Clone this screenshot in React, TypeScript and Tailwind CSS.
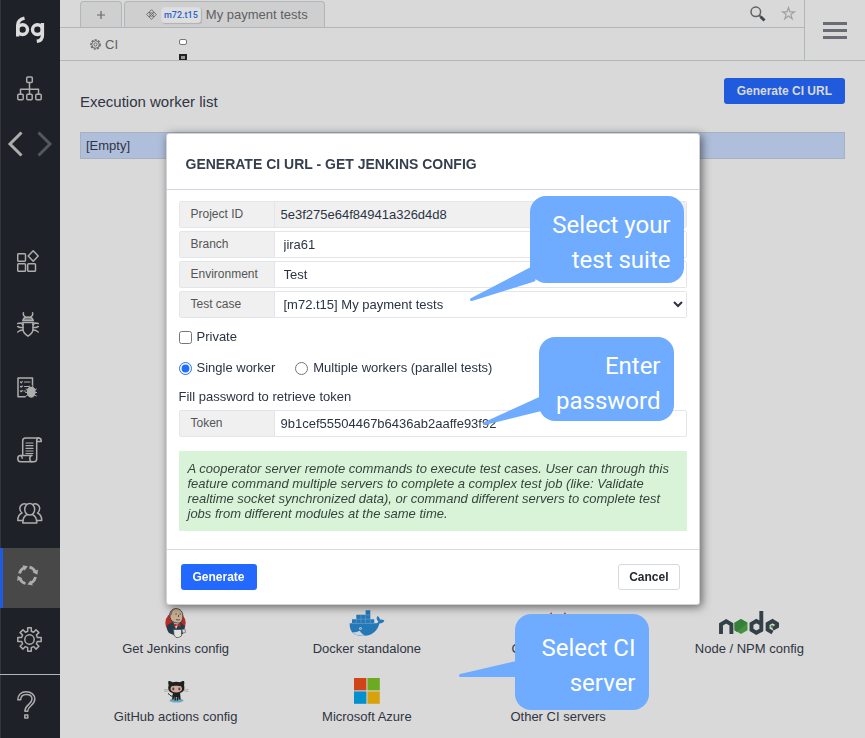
import type { ReactNode } from "react";
import { SiGitlab } from "react-icons/si";

const stroke = {
  fill: "none",
  stroke: "currentColor",
  strokeWidth: 1.5,
  strokeLinejoin: "round" as const,
  strokeLinecap: "round" as const,
};

function Logo() {
  return (
    <svg width="30" height="28" viewBox="0 0 30 28" fill="none" stroke="#dcdcdc" strokeWidth="3.4" aria-label="bg">
      <path d="M2.700 20.500V9.500C2.700 6 5 3.200 9.500 2.200" />
      <circle cx="7.600" cy="13.600" r="4.900" />
      <circle cx="22.400" cy="13.600" r="4.900" />
      <path d="M27.400 7v12.500c0 3.300-2 5.300-5.600 5.800" />
    </svg>
  );
}

function SitemapIcon() {
  return (
    <svg width="25" height="25" viewBox="0 0 25 25" {...stroke}>
      <rect x="9.700" y="1" width="5.600" height="5.600" rx="1" />
      <rect x="0.800" y="18.200" width="5.400" height="5.600" rx="1" />
      <rect x="9.800" y="18.200" width="5.400" height="5.600" rx="1" />
      <rect x="18.800" y="18.200" width="5.400" height="5.600" rx="1" />
      <path d="M12.500 6.600v11.600M3.500 18.200v-5h18v5" />
    </svg>
  );
}

function BlocksIcon() {
  return (
    <svg width="22" height="22" viewBox="0 0 22 22" {...stroke}>
      <rect x="0.700" y="3.700" width="7.800" height="7.600" rx="1" />
      <rect x="0.700" y="13.700" width="7.800" height="7.600" rx="1" />
      <rect x="10.700" y="13.700" width="7.800" height="7.600" rx="1" />
      <path d="M16.200 0.800l5 5.200-5 5.200-5-5.200z" />
    </svg>
  );
}

function BugIcon() {
  return (
    <svg width="22" height="25" viewBox="0 0 22 25" {...stroke}>
      <path d="M6.400 0.800v2.400l2 1.800M15.600 0.800v2.400l-2 1.800" />
      <path d="M5.800 8.600C6.200 6 8 4.900 11 4.900s4.800 1.100 5.200 3.700z" fill="#77787a" />
      <path d="M5.200 10.500h11.600M6 10.500v7c0 3 2.500 5 5 6.700 2.500-1.700 5-3.700 5-6.700v-7" />
      <path d="M6 12.700L3.500 11 .800 11.500M6 15.500H3L.700 14.500M6 18l-3 .500L.800 20M16 12.700l2.500-1.700 2.700.500M16 15.500h3l2.300-1M16 18l3 .500 2.200 1.500" />
    </svg>
  );
}

function ReportIcon() {
  return (
    <svg width="20" height="21" viewBox="0 0 20 21" {...stroke}>
      <path d="M8.200 19.700H1V1h14.500v7" />
      <path d="M3.500 5l.800.800 1-1.300M7.500 5h5.500M3.500 9.500l.800.700 1-1.200M7.500 9.500h4M3.500 14l.800.700 1-1.200M7 14h1.500" strokeWidth="1.200" />
      <path d="M10.500 14.500c0-2.700 1.400-4 3.700-4s3.700 1.300 3.700 4c0 3-1.500 5.500-3.700 5.500s-3.700-2.500-3.700-5.500z" fill="currentColor" />
      <path d="M12.500 9l.7 1.500M16 9l-.7 1.500M9 12l1.500.8M8.600 15.500h2M9 19l1.800-1M19.400 12l-1.500.8M19.700 15.500h-2M19.400 19l-1.800-1" strokeWidth="1" />
    </svg>
  );
}

function ScrollIcon() {
  return (
    <svg width="25" height="26" viewBox="0 0 25 26" {...stroke}>
      <path d="M5.700 18V4c0-2 1-3 2.800-3h13.200c1.500 0 2.600 1.300 2.600 3.500h-4.500" />
      <path d="M21.700 1c-1.300 0-2 1-2 2.500v18c0 2-1 3.300-2.700 3.300H3.500C1.800 24.800.800 23.500.800 21.500S1.800 18.600 3.500 18.600h11.300" />
      <path d="M14.800 18.600c-1.300 0-2 1.200-2 2.900 0 2 .700 3.300 2.200 3.300M3.800 18.600c1 .5 1.400 1.500 1.400 2.700" />
      <path d="M9 6h7M9 8.700h7M9 11.400h7M9 14h7M9 16.500h7" strokeWidth="1.200" />
    </svg>
  );
}

function UsersIcon() {
  return (
    <svg width="26" height="22" viewBox="0 0 26 22" {...stroke}>
      <ellipse cx="12.700" cy="7.300" rx="5" ry="5.800" />
      <path d="M10 12.500c-2.800 1.300-4.200 3-4.200 8.500h14c0-5.500-1.500-7.200-4.300-8.500" />
      <path d="M9.300 2.300A4.600 4.600 0 0 0 2.800 6c0 2.500 1 4 2.200 5-2.700 1-4.200 3-4.200 7.500h5" />
      <path d="M16.200 2.300A4.600 4.600 0 0 1 22.700 6c0 2.500-1 4-2.200 5 2.700 1 4.200 3 4.200 7.500h-5" />
    </svg>
  );
}

function CycleIcon() {
  return (
    <svg width="21" height="21" viewBox="0 0 21 21" fill="none" stroke="currentColor" strokeWidth="2.800">
      <path d="M2.500 8.500C3.200 5.700 4.800 3.800 7 2.700M12.500 2.200c2.800.700 4.600 2.300 5.600 4.600M18.500 12c-.7 2.900-2.300 4.900-4.500 5.900M8.500 18.500c-2.900-.7-4.600-2.300-5.600-4.700" />
      <path d="M5.500.3l5.300 1-3.200 4.400zM21 4.500l-.6 5.300-4.800-2.600zM15.800 20.500l-5.400-.9 3.300-4.400zM.2 16l.5-5.200 4.700 2.400z" fill="currentColor" stroke="none" />
    </svg>
  );
}

function GearIcon() {
  return (
    <svg width="25" height="25" viewBox="0 0 25 25" {...stroke}>
      <circle cx="12.500" cy="12.500" r="4.700" />
      <path d="M10.700.8h3.600v3.400l2.300 1 2.400-2.500 2.900 2.900-2.500 2.400 1 2.400h3.800v4h-3.800l-1 2.300 2.500 2.500-2.900 2.900-2.400-2.500-2.300 1v3.600h-3.600v-3.600l-2.300-1L6 22.100l-2.900-2.900 2.500-2.500-1-2.300H.8v-4h3.800l1-2.400-2.500-2.400L6 2.700l2.400 2.500 2.300-1z" />
    </svg>
  );
}

function HelpIcon() {
  return (
    <svg width="19" height="28" viewBox="0 0 19 28" {...stroke}>
      <path d="M.8 8.800C.8 4 4 .8 9.200.8S17.800 3.900 17.800 8c0 6.800-7.100 6.600-7.100 12.200H7.900c0-6.800 7.100-6.800 7.100-12.200 0-2.600-2.200-4.500-5.700-4.500S3.700 5.400 3.700 8.800z" />
      <rect x="7.800" y="23.900" width="3" height="3" />
    </svg>
  );
}

function Magnifier() {
  return (
    <svg width="16" height="16" viewBox="0 0 16 16" fill="none" stroke="#5f6266">
      <circle cx="5.800" cy="5.800" r="4.800" strokeWidth="1.500" />
      <path d="M9 9l2.500 2.500" strokeWidth="2" />
      <path d="M10.700 10.700l3.800 3.800" strokeWidth="3" stroke="#43474c" />
    </svg>
  );
}

function Jenkins() {
  return (
    <svg width="22" height="30" viewBox="0 0 22 30">
      <ellipse cx="10.500" cy="15" rx="10.200" ry="11" fill="#b52b27" />
      <path d="M4 25c-2-3-3-6-1-8.500L8 14l8 .5 4 4-2 7.500-7 2z" fill="#253a4b" />
      <path d="M8 13l7 1-4 7z" fill="#d8d8d6" />
      <path d="M9 15.500l3 1 3.500-1.500v4L12 17.500 9 19z" fill="#b52b27" />
      <path d="M5 9.500C4 3.500 7 .6 11 .6s7.300 3 6.800 8.500c-.3 4-2 6.200-5.300 6C9 15 5.800 13 5 9.500z" fill="#c7ae92" stroke="#33302e" strokeWidth=".8" />
      <path d="M5 9.500C3.500 4 6.500.8 10.500.7 8 1.700 7 4 7 6.500L6 7z" fill="#77706a" />
      <path d="M10.300 6h1.500M14.500 6H16M11 11.500c1.500.7 3 .5 4 0M13.500 7v2" stroke="#45362e" strokeWidth=".8" fill="none" />
      <path d="M8.500 21.500h8v6.500l-3 1.500h-2.500L9 27z" fill="#e0e0e0" stroke="#454545" strokeWidth=".7" />
      <path d="M17 21.500l3-.5.5 3.500-3 .5z" fill="#d8d8d6" stroke="#555" strokeWidth=".6" />
    </svg>
  );
}

function Docker() {
  return (
    <svg width="36" height="27" viewBox="0 0 36 27">
      <path d="M.7 13.300h26.500c1.600-.3 2.200-1 2-2C27.300 9.600 27.300 7.600 28.500 6c1.400.8 2.300 2 2.500 3.700 1.500-.3 3-.1 4.300.8-.8 2.200-2.500 3-4.900 3C28.200 21.800 22.500 26 13.500 26 5.500 26 .2 22.500.7 13.300z" fill="#2478b8" />
      <path d="M3 9.200h22.200v4.300H3zM7.300 4.700h14v5h-14zM16.600.3h4.700v5h-4.700z" fill="#2478b8" />
      <path d="M7.300 9.200v4M11.900 4.700v8.500M16.500 4.700v8.500M21.200 9.200v4M7.300 9.200h14M16.600 4.900h4.700M3 13.400h22.200" stroke="#6a9fc6" strokeWidth=".6" />
      <path d="M3.500 22.300c3 .3 5.500-.5 7.300-1.500 1.500 2.500 3.200 4.100 5.700 4.900C10.500 26.300 6 25.300 3.500 22.300z" fill="#c9d5dc" />
      <circle cx="11.500" cy="18.600" r="1.300" fill="#d9d9d9" />
      <circle cx="11.600" cy="18.700" r=".5" fill="#24394c" />
    </svg>
  );
}

function NodeLogo() {
  return (
    <svg width="60" height="26" viewBox="0 0 60 26" fill="none" stroke="#344047" strokeWidth="3.900" aria-label="Node">
      <path d="M2 24v-9.700l5.200-3 5.200 3V24" />
      <path d="M22 9l6.500 3.700v7.600L22 24l-6.500-3.700v-7.600z" fill="#43923f" stroke="none" />
      <path d="M22 9l6.500 3.700L18 22l-2.500-1.700v-7.600z" fill="#37803a" stroke="none" />
      <path d="M42.300 1v19l-5 2.700-4.800-2.900v-6l4.800-2.800 5 2.700" />
      <path d="M53.500 22.500l-4.900-2.800v-5.800l4.900-2.900 4.700 2.900v2.300l-4.500 2.500" />
      <circle cx="53" cy="16.500" r="1.400" fill="#43923f" stroke="none" />
    </svg>
  );
}

function Octocat() {
  return (
    <svg width="26" height="23" viewBox="0 0 26 23">
      <ellipse cx="13.500" cy="20.500" rx="7" ry="2" fill="#68a9c4" />
      <path d="M10 12h7l.7 7.500h-2l-.4-3-.2 4h-1.400v-3.500h-.8V20.500h-1.400l-.3-4-.6 3H9z" fill="#20201f" />
      <path d="M10 16c-3 1-3-2-5-2.500" stroke="#20201f" fill="none" />
      <path d="M5.500 1c2 0 3 .6 4 1.300a16 16 0 0 1 7.500 0c1-.7 2-1.300 4-1.300.5 1.800.4 3 0 4 1.300 4.500-.3 8.500-7.700 8.500S4.200 9.500 5.700 5c-.5-1-.6-2.200-.2-4z" fill="#20201f" />
      <path d="M8.700 6.300c1.500-.8 7.600-.8 9.200 0 2.300 2.300 1.300 6.200-4.600 6.200s-6.900-3.900-4.600-6.200z" fill="#cfa99a" />
      <ellipse cx="10.300" cy="9" rx="1" ry="1.400" fill="#5f3a35" />
      <ellipse cx="16.300" cy="9" rx="1" ry="1.400" fill="#5f3a35" />
      <path d="M1 9.500l4.500.3M1 11.500l4.500-.6M25.500 9.500l-4.500.3M25.500 11.500l-4.500-.6" stroke="#99908c" strokeWidth=".6" />
    </svg>
  );
}

function Microsoft() {
  return (
    <svg width="26" height="26" viewBox="0 0 26 26">
      <path fill="#cf4519" d="M0 0h12.400v12.400H0z" />
      <path fill="#6caa22" d="M13.400 0h12.400v12.400H13.400z" />
      <path fill="#0490cc" d="M0 13.400h12.400v12.400H0z" />
      <path fill="#d7a20e" d="M13.400 13.400h12.400v12.400H13.400z" />
    </svg>
  );
}

function SideItem({ label, active = false, children }: { label: string; active?: boolean; children: ReactNode }) {
  return (
    <button
      aria-label={label}
      className={
        active
          ? "flex h-[60px] w-full items-center border-l-3 border-[#205bde] bg-[#484848] pb-1.5 pl-[14px]"
          : "flex h-[60px] w-full items-center pb-1 pl-[17px]"
      }
    >
      {children}
    </button>
  );
}

function Sidebar() {
  return (
    <nav className="flex w-[60px] shrink-0 flex-col bg-[#1e2128] text-[#adadad] shadow-[inset_1px_0_0_#34363b]">
      <div className="flex h-[60px] items-center justify-center">
        <Logo />
      </div>
      <div className="flex h-[60px] items-center pb-1 pl-[17px]">
        <button aria-label="Structure">
          <SitemapIcon />
        </button>
      </div>
      <div className="flex h-12 items-center justify-between px-[7px]">
        <button aria-label="Back">
          <svg width="16" height="26" viewBox="0 0 16 26" fill="none" stroke="#adadad" strokeWidth="3">
            <path d="M14.500 1.500L3 13l11.500 11.500" />
          </svg>
        </button>
        <button aria-label="Forward">
          <svg width="16" height="26" viewBox="0 0 16 26" fill="none" stroke="#55575b" strokeWidth="3">
            <path d="M1.500 1.500L13 13 1.500 24.500" />
          </svg>
        </button>
      </div>
      <div className="mt-auto flex flex-col gap-[3px] pb-[3px]">
        <SideItem label="Modules"><BlocksIcon /></SideItem>
        <SideItem label="Bugs"><BugIcon /></SideItem>
        <SideItem label="Reports"><ReportIcon /></SideItem>
        <SideItem label="Scripts"><ScrollIcon /></SideItem>
        <SideItem label="Team"><UsersIcon /></SideItem>
        <SideItem label="CI" active><CycleIcon /></SideItem>
        <SideItem label="Settings"><GearIcon /></SideItem>
      </div>
      <div className="flex h-16 items-center border-t border-[#b4b4b4] pb-1 pl-[17px]">
        <button aria-label="Help">
          <HelpIcon />
        </button>
      </div>
    </nav>
  );
}

function TopBar() {
  return (
    <header className="flex h-[61px] border-b border-[#b1b6ba] text-[#5e6064]">
      <div className="flex flex-1 flex-col">
        <div className="flex h-7 items-end justify-between border-b border-[#b1b6ba] pr-2 pl-5">
          <div className="flex gap-0.5 self-stretch pt-px">
            <button aria-label="New tab" className="flex w-[42px] items-center justify-center rounded-t border border-b-0 border-[#b1b6ba] bg-[#cfcfcf]">
              <svg width="8" height="8" viewBox="0 0 8 8" stroke="#66686a" strokeWidth="1.200">
                <path d="M4 0v8M0 4h8" />
              </svg>
            </button>
            <button className="flex items-center rounded-t border border-b-0 border-[#b1b6ba] bg-[#cfcfcf] pr-4 pl-[21px] text-[13px]">
              <svg width="11" height="11" viewBox="0 0 11 11" fill="none" stroke="#6d6f71" strokeWidth="1">
                <path d="M5.500.7l4.800 4.800-4.800 4.800L.7 5.500zM3 3l5 5M8 3L3 8" />
                <circle cx="5.500" cy="5.500" r="1.800" />
              </svg>
              <span className="mr-[5px] ml-1 rounded-[3px] border border-[#d8dadd] bg-[#dedede] px-0.5 font-[Roboto,sans-serif] text-[9px] leading-[14px] font-medium text-[#2563cf] shadow-[1px_1px_1px_#b0b0b0]">
                m72.t15
              </span>
              My payment tests
            </button>
          </div>
          <div className="flex items-center gap-[15px] self-stretch">
            <button aria-label="Search"><Magnifier /></button>
            <button aria-label="Favorite">
              <svg width="15" height="15" viewBox="0 0 15 15" fill="none" stroke="#a2a2a2" strokeWidth="1.200">
                <path d="M7.500 1.500l1.400 4.300h4.600L9.800 8.500l1.400 4.300-3.700-2.700-3.700 2.700 1.400-4.300-3.700-2.700h4.600z" />
              </svg>
            </button>
          </div>
        </div>
        <div className="flex h-8 pl-[30px]">
          <div className="flex w-[89px] items-center gap-1 pt-px text-[13px]">
            <svg width="11" height="11" viewBox="0 0 11 11" fill="none" stroke="#66686b">
              <circle cx="5.500" cy="5.500" r="4.500" strokeWidth="1.600" strokeDasharray="2.200 1.100" />
              <circle cx="5.500" cy="5.500" r="3.600" strokeWidth=".8" />
              <circle cx="5.500" cy="5.500" r="1.600" strokeWidth="1" />
            </svg>
            CI
          </div>
          <div className="flex flex-col justify-between pt-[11px]">
            <span className="h-1.5 w-2 rounded-[2px] border border-[#777] bg-white" />
            <span className="h-1.5 w-2 border-2 border-b border-[#222] bg-[#999]" />
          </div>
        </div>
      </div>
      <div className="flex w-[61px] items-center justify-center border-l border-[#b1b6ba]">
        <button aria-label="Menu" className="flex flex-col gap-1">
          <span className="h-[3px] w-6 bg-[#696c75]" />
          <span className="h-[3px] w-6 bg-[#696c75]" />
          <span className="h-[3px] w-6 bg-[#696c75]" />
        </button>
      </div>
    </header>
  );
}

const servers: { name: string; icon: ReactNode }[] = [
  { name: "Get Jenkins config", icon: <Jenkins /> },
  { name: "Docker standalone", icon: <Docker /> },
  { name: "GitLab CI config", icon: <SiGitlab size={22} color="#c4492f" /> },
  { name: "Node / NPM config", icon: <NodeLogo /> },
  { name: "GitHub actions config", icon: <Octocat /> },
  { name: "Microsoft Azure", icon: <Microsoft /> },
  { name: "Other CI servers", icon: null },
];

const rowBox = "flex h-[27px] overflow-hidden rounded-[2px] border border-[#e3e5e8]";
const rowLabel = "w-[95px] shrink-0 border-r border-[#e3e5e8] bg-[#f0f0f0] pl-[11px] text-[12px] leading-6 text-[#555]";

function SelectRow({ id, label, value }: { id: string; label: string; value: string }) {
  return (
    <div className={rowBox}>
      <label htmlFor={id} className={rowLabel}>{label}</label>
      <select id={id} className="min-w-0 flex-1 bg-white pl-[5px] text-[13px] text-[#2b3442]">
        <option>{value}</option>
      </select>
    </div>
  );
}

function Callout({ className, tailClassName, tail, children }: { className: string; tailClassName: string; tail: ReactNode; children: ReactNode }) {
  return (
    <div className={`absolute rounded-[16px] bg-[#6facff] pr-[13px] text-right font-[Roboto,sans-serif] text-[24px] leading-[35px] text-white ${className}`}>
      <svg className={`absolute fill-[#6facff] stroke-[#6facff] ${tailClassName}`} strokeWidth="3" strokeLinejoin="round">
        {tail}
      </svg>
      {children}
    </div>
  );
}

function Dialog() {
  return (
    <div className="fixed inset-0 flex items-center justify-center">
      <section
        role="dialog"
        aria-labelledby="dialog-title"
        className="relative w-[534px] rounded-[3px] border border-[#cdd3d8] bg-white text-[13px] text-[#2b3442] shadow-[2px_2px_10px_rgba(0,0,0,0.55)]"
      >
        <h2 id="dialog-title" className="border-b border-[#d0d3e0] px-[19px] pt-[20px] pb-[15px] text-[14px] leading-5 font-bold text-[#363f4e]">
          GENERATE CI URL - GET JENKINS CONFIG
        </h2>
        <form className="px-3 pt-[11px] pb-[18px]">
          <div className="flex flex-col gap-[3px]">
            <div className={rowBox}>
              <label htmlFor="project" className={rowLabel}>Project ID</label>
              <input id="project" readOnly defaultValue="5e3f275e64f84941a326d4d8" className="min-w-0 flex-1 bg-[#f0f0f0] px-[6px]" />
            </div>
            <SelectRow id="branch" label="Branch" value="jira61" />
            <SelectRow id="environment" label="Environment" value="Test" />
            <SelectRow id="testcase" label="Test case" value="[m72.t15] My payment tests" />
          </div>
          <label className="mt-[9px] flex h-5 items-center gap-[5px]">
            <input type="checkbox" className="size-[13px]" />
            Private
          </label>
          <div className="mt-[11px] flex h-5 items-center gap-5">
            <label className="flex items-center gap-[5px]">
              <input type="radio" name="workers" defaultChecked className="size-[13px] accent-[#1f6fff]" />
              Single worker
            </label>
            <label className="flex items-center gap-[5px]">
              <input type="radio" name="workers" className="size-[13px] accent-[#1f6fff]" />
              Multiple workers (parallel tests)
            </label>
          </div>
          <p className="mt-[9px] leading-5">Fill password to retrieve token</p>
          <div className={`mt-[3px] ${rowBox}`}>
            <label htmlFor="token" className={rowLabel}>Token</label>
            <input id="token" defaultValue="9b1cef55504467b6436ab2aaffe93f92" className="min-w-0 flex-1 px-[6px]" />
          </div>
          <p className="mt-[14px] bg-[#d8f3d8] px-[9px] py-[10px] leading-[15px] text-[#38433d] italic">
            A cooperator server remote commands to execute test cases. User can through this feature command multiple
            servers to complete a complex test job (like: Validate realtime socket synchronized data), or command
            different servers to complete test jobs from different modules at the same time.
          </p>
        </form>
        <footer className="flex justify-between border-t border-[#d5dadd] pt-[14px] pr-[19px] pb-[14px] pl-[14px] text-[12px] font-bold">
          <button className="h-[26px] rounded-[3px] bg-[#2469ff] px-3 text-white">Generate</button>
          <button className="h-[26px] rounded-[3px] border border-[#d5dadd] bg-white px-[10px] text-[#24282f]">Cancel</button>
        </footer>

        <Callout
          className="top-[62px] left-[363px] h-[87px] w-[154px] pt-3"
          tailClassName="top-[66px] left-[-62px] h-[44px] w-[80px]"
          tail={<path d="M3.500 37.500L66 5v13z" />}
        >
          Select your<br />test suite
        </Callout>
        <Callout
          className="top-[203px] left-[372px] h-[84px] w-[135px] pt-3"
          tailClassName="top-[54px] left-[-58px] h-[40px] w-[76px]"
          tail={<path d="M3.500 32.500L66 4v13z" />}
        >
          Enter<br />password
        </Callout>
        <Callout
          className="top-[480px] left-[348px] h-[96px] w-[134px] pt-[17px]"
          tailClassName="top-[44px] left-[-58px] h-[24px] w-[76px]"
          tail={<path d="M3.500 17.500L66 3v14.500z" />}
        >
          Select CI<br />server
        </Callout>
      </section>
    </div>
  );
}

export default function App() {
  return (
    <div className="flex min-h-screen bg-[#d9d9d9] font-['Liberation_Sans',Arial,sans-serif]">
      <Sidebar />
      <div className="flex min-w-0 flex-1 flex-col">
        <TopBar />
        <main className="flex flex-1 flex-col px-5 pt-[17px] pb-[11px] text-[13px] text-[#2f3542]">
          <div className="flex items-start justify-between">
            <h1 className="pt-[14px] text-[15px] leading-5">Execution worker list</h1>
            <button className="h-[26px] rounded-[3px] bg-[#205bde] px-[13px] text-[12px] font-bold text-[#d9d9d9]">Generate CI URL</button>
          </div>
          <div className="mt-5 h-[27px] border border-[#a8b2bf] bg-[#afbfdb] px-[5px] leading-[25px]">[Empty]</div>
          <div className="mt-auto grid grid-cols-4 gap-y-4">
            {servers.map((s) => (
              <button key={s.name} className="flex flex-col items-center leading-5">
                <span className="flex h-8 items-center">{s.icon}</span>
                {s.name}
              </button>
            ))}
          </div>
        </main>
      </div>
      <Dialog />
    </div>
  );
}
